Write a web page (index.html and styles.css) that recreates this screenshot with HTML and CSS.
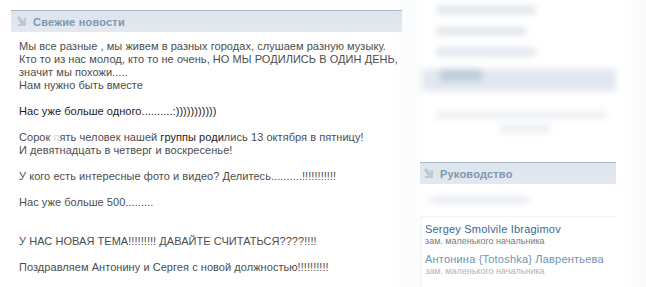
FILE: index.html
```html
<!DOCTYPE html>
<html lang="ru">
<head>
    <meta charset="UTF-8">
    <title>Свежие новости</title>
    <link rel="stylesheet" href="styles.css">
</head>
<body>
    <div class="page">
        <div class="main-col">
            <div class="box-header">
                <svg class="box-arrow" width="11" height="11" viewBox="0 0 11 11">
                    <path d="M1 2 L3 0 L8 5 L8 2 L10 2 L10 10 L2 10 L2 8 L5 8 Z" fill="#bcc8d6"/>
                </svg>
                <span>Свежие новости</span>
            </div>
            <div class="news-text">
                <p>Мы все разные , мы живем в разных городах, слушаем разную музыку.<br>
                Кто то из нас молод, кто то не очень, НО МЫ РОДИЛИСЬ В ОДИН ДЕНЬ,<br>
                значит мы похожи.....<br>
                Нам нужно быть вместе</p>
                <p class="dark">Нас уже больше одного..........:)))))))))))</p>
                <p>Сорок <span class="smudge">п</span>ять человек нашей <span class="dark">группы роди</span>лись 13 октября в пятницу!<br>
                И девятнадцать в четверг и воскресенье!</p>
                <p>У кого есть интересные фото и видео? Делитесь..........!!!!!!!!!!!</p>
                <p class="gap-after">Нас уже больше 500.........</p>
                <p>У НАС НОВАЯ ТЕМА!!!!!!!!! ДАВАЙТЕ СЧИТАТЬСЯ????!!!!</p>
                <p>Поздравляем Антонину и Сергея с новой должностью!!!!!!!!!!</p>
            </div>
        </div>

        <div class="side-col">
            <div class="blurred side-top">
                <div class="blur-line wide"></div>
                <div class="blur-line"></div>
                <div class="blur-line wide"></div>
                <div class="blur-bar"><div class="blur-bar-tab"></div></div>
                <div class="blur-line long soft"></div>
                <div class="blur-line mid soft"></div>
            </div>

            <div class="box-header">
                <svg class="box-arrow" width="11" height="11" viewBox="0 0 11 11">
                    <path d="M1 2 L3 0 L8 5 L8 2 L10 2 L10 10 L2 10 L2 8 L5 8 Z" fill="#bcc8d6"/>
                </svg>
                <span>Руководство</span>
            </div>
            <div class="blurred">
                <div class="blur-line short soft"></div>
            </div>
            <div class="people">
                <div class="person">
                    <div class="person-name">Sergey Smolvile Ibragimov</div>
                    <div class="person-role">зам. маленького начальника</div>
                </div>
                <div class="person faded">
                    <div class="person-name">Антонина {Totoshka} Лаврентьева</div>
                    <div class="person-role">зам. маленького начальника</div>
                </div>
            </div>
        </div>
    </div>
</body>
</html>
```

FILE: styles.css
```css
* {
    margin: 0;
    padding: 0;
    box-sizing: border-box;
}

body {
    font-family: "Liberation Sans", Arial, sans-serif;
    font-size: 11px;
    background: #ffffff;
    color: #4d4d4d;
    width: 646px;
    height: 287px;
    overflow: hidden;
}

.page {
    display: flex;
    padding: 10px 0 0 11px;
    height: 287px;
    background: linear-gradient(90deg, #ffffff 0%, #ffffff 60%, #fafbfc 64%, #ffffff 66%, #ffffff 96%, #f8f9fa 100%);
}

.main-col {
    width: 391px;
}

.box-header {
    display: flex;
    align-items: center;
    height: 22px;
    border-top: 1px solid #a9bbd0;
    background: linear-gradient(180deg, #dde4ec 0%, #e4e9ef 100%);
    padding-left: 5px;
    font-weight: bold;
    font-size: 11px;
    letter-spacing: 0.2px;
    color: #7f96b1;
}

.box-arrow {
    margin-right: 6px;
    flex-shrink: 0;
}

.news-text {
    padding: 8px 0 0 8px;
    line-height: 13px;
}

.news-text p {
    margin-bottom: 13px;
    white-space: nowrap;
    letter-spacing: 0.05px;
}

.news-text p.gap-after {
    margin-bottom: 26px;
}

.dark {
    color: #222222;
}

.smudge {
    color: #d6d6d6;
}

.side-col {
    width: 196px;
    margin-left: 18px;
    margin-top: -10px;
}

.side-col .box-header {
    padding-left: 3px;
}

.blurred {
    filter: blur(3px);
}

.side-top {
    padding: 4px 0 0 10px;
    height: 162px;
}

.blur-line {
    height: 8px;
    width: 90px;
    margin: 2px 0 13px 6px;
    background: #dfe5ec;
    border-radius: 3px;
}

.blur-line.wide {
    width: 100px;
}

.blur-line.soft {
    background: #ebeef2;
}

.blur-line.long {
    width: 170px;
    margin-top: 20px;
    margin-bottom: 6px;
}

.blur-line.mid {
    width: 50px;
    margin-left: 70px;
}

.blur-line.short {
    width: 100px;
    margin: 12px 0 12px 10px;
}

.blur-bar {
    height: 22px;
    margin: 4px 0 0 -8px;
    background: #e1e7ee;
}

.blur-bar-tab {
    width: 42px;
    height: 12px;
    margin-left: 18px;
    margin-top: 6px;
    background: #bfcddc;
}

.people {
    border-left: 1px solid #f0f2f5;
    border-top: 1px solid #f0f2f5;
    padding: 5px 0 6px 4px;
}

.person {
    margin-bottom: 6px;
}

.person-name {
    color: #3a6894;
    font-size: 11px;
    line-height: 14px;
    letter-spacing: 0.2px;
}

.person-role {
    color: #7a7a7a;
    font-size: 9px;
    line-height: 10px;
}

.person.faded .person-name {
    color: #7192b3;
}

.person.faded .person-role {
    color: #b3b3b3;
}
```
